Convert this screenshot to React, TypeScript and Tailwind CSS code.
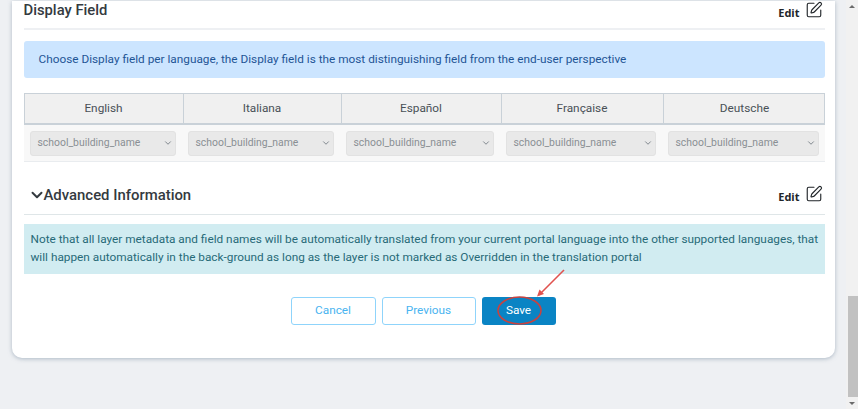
import React from 'react';
import { ChevronDown, SquarePen } from 'lucide-react';

const languages = ['English', 'Italiana', 'Español', 'Française', 'Deutsche'];

const EditLink: React.FC = () => (
  <div className="flex items-center gap-[5px] text-[#212529]">
    <span className="text-[11px] font-bold leading-none mt-[4px] font-['Open_Sans',sans-serif]">Edit</span>
    <SquarePen size={18} strokeWidth={1.5} />
  </div>
);

const Scrollbar: React.FC = () => (
  <div className="w-[12px] h-full bg-[#f1f1f1] flex flex-col items-end">
    <div className="h-[12px] w-full flex items-center justify-center">
      <div className="w-0 h-0 border-x-[3px] border-x-transparent border-b-[3px] border-b-[#6b6b6b]" />
    </div>
    <div className="flex-1 w-full flex flex-col justify-end">
      <div className="h-[101px] w-[10px] bg-[#c1c1c1] ml-auto" />
    </div>
    <div className="h-[12px] w-full flex items-center justify-center">
      <div className="w-0 h-0 border-x-[3px] border-x-transparent border-t-[3px] border-t-[#6b6b6b]" />
    </div>
  </div>
);

export default function App() {
  return (
    <div className="relative w-[858px] h-[409px] overflow-hidden flex bg-[#eef0f3] font-['Roboto',sans-serif]">
      <div className="flex-1 min-w-0 pl-[12px] pr-[10px] pt-px">
        <div className="h-[357px] w-[823px] bg-white rounded-b-[10px] shadow-[0_1px_4px_rgba(120,140,160,0.55)] pl-[11.5px] pr-[10.5px]">
          <div className="h-[27px] flex items-start justify-between pr-[2px]">
            <h2 className="text-[14.8px] font-medium leading-[18px] text-[#343a40]">Display Field</h2>
            <EditLink />
          </div>
          <div className="h-[2px] bg-[#eef0f3]" />

          <div className="mt-[11px] h-[37px] bg-[#cce5ff] rounded-[3px] px-[15px] flex items-center text-[11.8px] text-[#1f5596]">
            Choose Display field per language, the Display field is the most distinguishing field from the end-user perspective
          </div>

          <div className="mt-[15px] border-b border-[#e9ecef]">
            <div className="grid grid-cols-[158px_158px_160px_162px_163px] h-[32px] bg-[#f0f0f0] border border-b-2 border-[#c9d1d8]">
              {languages.map((lang, i) => (
                <div
                  key={lang}
                  className={`flex items-center justify-center text-[11.8px] text-[#495057] ${i > 0 ? 'border-l border-[#c9d1d8]' : ''}`}
                >
                  {lang}
                </div>
              ))}
            </div>
            <div className="grid grid-cols-[158px_158px_160px_162px_163px] h-[36px] bg-[#f8f8f8]">
              {languages.map(lang => (
                <div key={lang} className="flex items-center px-[6px]">
                  <div className="w-full h-[25px] bg-[#e9e9e9] border border-[#e2e2e2] rounded-[3px] pl-[7px] pr-[2px] flex items-center justify-between text-[10.4px] text-[#8a8f94]">
                    <span>school_building_name</span>
                    <ChevronDown size={10} strokeWidth={2} className="text-[#6c757d]" />
                  </div>
                </div>
              ))}
            </div>
          </div>

          <div className="mt-[23px] h-[29px] flex items-start justify-between pl-[4px] pr-[2px]">
            <div className="flex items-center text-[#343a40]">
              <ChevronDown size={18} strokeWidth={2.6} />
              <h2 className="text-[14.9px] font-medium leading-[20px] ml-[-2px]">Advanced Information</h2>
            </div>
            <EditLink />
          </div>
          <div className="h-px bg-[#dfe6e8]" />

          <div className="mt-[9px] h-[50px] bg-[#d1ecf1] pl-[7px] pr-[2px] pt-[6px] text-[11.8px] leading-[18px] text-[#276a78]">
            Note that all layer metadata and field names will be automatically translated from your current portal language into the other supported languages, that will happen automatically in the back-ground as long as the layer is not marked as Overridden in the translation portal
          </div>

          <div className="mt-[23px] flex justify-center gap-[6px] pr-[2px]">
            <button className="w-[85px] h-[28px] bg-white border border-[#8fd4fb] rounded-[3px] text-[11.8px] text-[#49b4f0]">Cancel</button>
            <button className="w-[94px] h-[28px] bg-white border border-[#8fd4fb] rounded-[3px] text-[11.8px] text-[#49b4f0]">Previous</button>
            <button className="w-[74px] h-[28px] bg-[#0a84c4] rounded-[3px] text-[11.8px] text-white">Save</button>
          </div>
        </div>
      </div>

      <Scrollbar />

      {/* red annotation drawn over the Save button */}
      <svg className="absolute left-0 top-0 pointer-events-none" width="858" height="409" viewBox="0 0 858 409" fill="none">
        <ellipse cx="519.5" cy="310.5" rx="21.5" ry="13.5" stroke="#c8423f" strokeWidth="1.6" />
        <line x1="564" y1="270" x2="539" y2="295" stroke="#e0524f" strokeWidth="1.6" />
        <path d="M537 296.5 L539.5 289.5 L544 294 Z" fill="#e0524f" />
      </svg>
    </div>
  );
}
